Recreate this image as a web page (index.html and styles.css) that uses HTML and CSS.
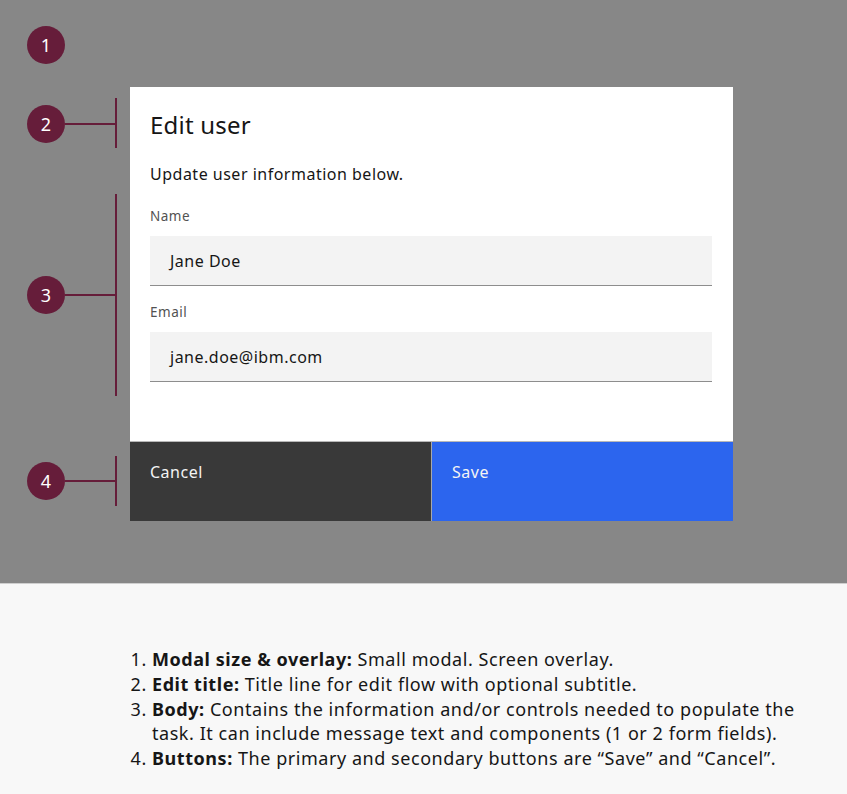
FILE: index.html
```html
<!DOCTYPE html>
<html lang="en">
<head>
<meta charset="utf-8">
<title>Edit user modal</title>
<link rel="stylesheet" href="styles.css">
</head>
<body>
<div class="stage">
  <div class="marker m1"><span class="dot">1</span></div>
  <div class="marker m2"><span class="dot">2</span><span class="tick"></span><span class="bracket"></span></div>
  <div class="marker m3"><span class="dot">3</span><span class="tick"></span><span class="bracket"></span></div>
  <div class="marker m4"><span class="dot">4</span><span class="tick"></span><span class="bracket"></span></div>

  <div class="modal">
    <div class="modal-body">
      <h1 class="title">Edit user</h1>
      <p class="subtitle">Update user information below.</p>
      <div class="field">
        <label class="label">Name</label>
        <div class="input">Jane Doe</div>
      </div>
      <div class="field">
        <label class="label">Email</label>
        <div class="input">jane.doe@ibm.com</div>
      </div>
    </div>
    <div class="modal-footer">
      <div class="btn btn-secondary">Cancel</div>
      <div class="btn btn-primary">Save</div>
    </div>
  </div>
</div>
<div class="notes">
  <ol class="list">
    <li><b>Modal size &amp; overlay:</b> Small modal. Screen overlay.</li>
    <li><b>Edit title:</b> Title line for edit flow with optional subtitle.</li>
    <li><b>Body:</b> Contains the information and/or controls needed to populate the task. It can include message text and components (1 or 2 form fields).</li>
    <li><b>Buttons:</b> The primary and secondary buttons are “Save” and “Cancel”.</li>
  </ol>
</div>
</body>
</html>
```
FILE: styles.css
```css
* { box-sizing: border-box; }
html, body { margin: 0; padding: 0; }
body {
  font-family: "Noto Sans", "Open Sans", sans-serif;
  color: #161616;
  background: #f8f8f8;
  width: 847px;
}
.stage {
  position: relative;
  height: 584px;
  background: #878787;
  border-bottom: 1px solid #cfcfcf;
  padding: 87px 0 0 130px;
}
.modal {
  width: 603px;
  background: #fff;
}
.modal-body {
  height: 354px;
  padding: 20px 20px 0 20px;
}
.title {
  margin: 0;
  font-weight: 400;
  font-size: 24px;
  line-height: 36px;
  letter-spacing: 0.2px;
}
.subtitle {
  margin: 19px 0 0;
  font-size: 16px;
  line-height: 24px;
  letter-spacing: 0.5px;
}
.field { margin-top: 21px; }
.field + .field { margin-top: 17px; }
.label {
  display: block;
  font-size: 13.5px;
  line-height: 18px;
  color: #525252;
  letter-spacing: 0.5px;
}
.input {
  margin-top: 11px;
  margin-right: 1px;
  height: 50px;
  background: #f3f3f3;
  border-bottom: 1px solid #8d8d8d;
  padding: 0 20px;
  font-size: 16px;
  line-height: 51px;
  letter-spacing: 0.5px;
}
.modal-footer {
  display: flex;
  height: 80px;
  border-top: 1px solid #b8b8b8;
}
.btn {
  flex: 1;
  padding: 19px 20px 0;
  font-size: 16px;
  line-height: 22px;
  color: #f4f4f4;
  letter-spacing: 0.5px;
}
.btn-secondary { background: #393939; }
.btn-primary {
  background: #2c65ee;
  border-left: 1px solid #a8a8a8;
}
.marker {
  position: absolute;
  left: 27px;
  height: 38px;
}
.dot {
  position: absolute;
  left: 0;
  top: 0;
  width: 38px;
  height: 38px;
  border-radius: 50%;
  background: #661d3a;
  color: #fff;
  font-size: 18px;
  line-height: 38px;
  text-align: center;
}
.tick {
  position: absolute;
  left: 38px;
  top: 18px;
  width: 51px;
  height: 1.5px;
  background: #661d3a;
}
.bracket {
  position: absolute;
  left: 88px;
  width: 1.5px;
  background: #661d3a;
}
.m1 { top: 26px; }
.m2 { top: 105px; }
.m2 .bracket { top: -7px; height: 50px; }
.m3 { top: 276px; }
.m3 .bracket { top: -82px; height: 202px; }
.m4 { top: 462px; }
.m4 .bracket { top: -6px; height: 50px; }
.notes {
  padding: 63px 0 0 130px;
  height: 210px;
}
.list {
  margin: 0;
  padding: 0 0 0 22px;
  width: 680px;
  font-size: 18px;
  line-height: 24.75px;
  letter-spacing: 0.55px;
  color: #161616;
}
.list b { font-weight: 700; }
```
